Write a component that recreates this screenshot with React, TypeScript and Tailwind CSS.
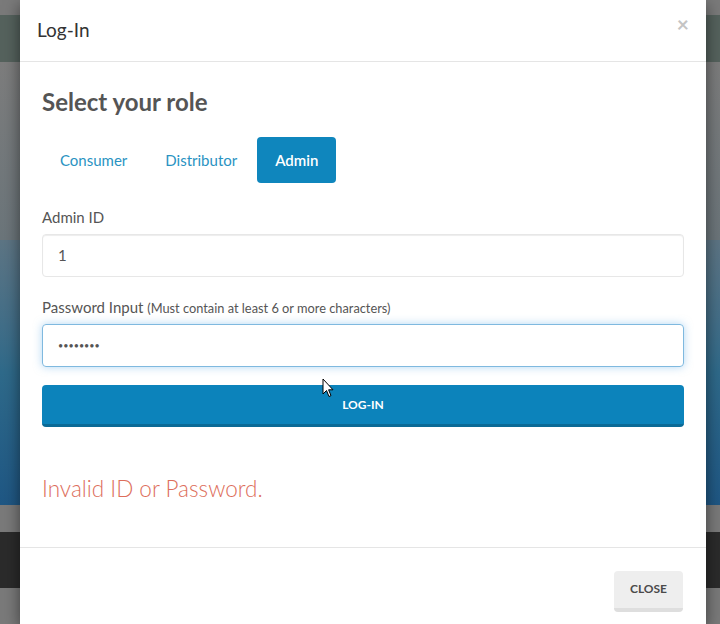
import { useState } from 'react';

const roles = ['Consumer', 'Distributor', 'Admin'];

export default function App() {
  const [role, setRole] = useState('Admin');
  const [adminId, setAdminId] = useState('1');
  const [password, setPassword] = useState('12345678');

  return (
    <div className="relative h-[624px] w-[720px] overflow-hidden" style={{ fontFamily: 'Lato, "Open Sans", sans-serif' }}>
      {/* page behind the backdrop */}
      <div className="flex h-full flex-col">
        <div className="h-[15px] bg-[#7a7a7a]" />
        <div className="h-[47px] bg-[#55625d]" />
        <div className="h-[178px] bg-gradient-to-b from-[#7d7d7d] to-[#6b757a]" />
        <div className="h-[265px] bg-gradient-to-b from-[#5d7584] via-[#2f6a8a] to-[#1f5784]" />
        <div className="h-[27px] bg-[#7a7a7a]" />
        <div className="h-[56px] bg-[#2b2b2b]" />
        <div className="flex-1 bg-[#7a7a7a]" />
      </div>

      {/* modal */}
      <div className="absolute left-[20px] top-0 w-[686px] bg-white shadow-[0_5px_15px_rgba(0,0,0,0.5)]">
        <div className="flex h-[62px] items-center justify-between border-b border-[#e5e5e5] px-[17px]">
          <h4 className="text-[19px] text-[#333]">Log-In</h4>
          <button className="-mt-[15px] text-[21px] font-bold leading-none text-[#c4c4c4]">×</button>
        </div>

        <div className="px-[22px] pb-[20px] pt-[28px]">
          <h3 className="text-[24px] font-bold leading-none text-[#555]">Select your role</h3>

          <div className="mt-[23px] flex gap-[2px]">
            {roles.map((r) => (
              <button
                key={r}
                onClick={() => setRole(r)}
                className={
                  r === role
                    ? 'h-[46px] rounded-[4px] bg-[#0f86bd] px-[18px] text-[15px] font-semibold text-white'
                    : 'h-[46px] rounded-[4px] px-[18px] text-[15px] text-[#2a93c2]'
                }
              >
                {r}
              </button>
            ))}
          </div>

          <label className="mt-[23px] block text-[15px] text-[#555]">{role} ID</label>
          <input
            value={adminId}
            onChange={(e) => setAdminId(e.target.value)}
            className="mt-[5px] h-[43px] w-full rounded-[4px] border border-[#e7e7e7] px-[15px] text-[15px] text-[#555] shadow-[inset_0_1px_1px_rgba(0,0,0,0.075)] outline-none"
          />

          <label className="mt-[19px] block text-[15px] text-[#555]">
            Password Input <span className="text-[12.8px]">(Must contain at least 6 or more characters)</span>
          </label>
          <input
            type="password"
            value={password}
            onChange={(e) => setPassword(e.target.value)}
            className="mt-[6px] h-[43px] w-full rounded-[4px] border border-[#7fb9df] px-[15px] text-[9px] text-[#555] shadow-[0_0_8px_rgba(102,175,233,0.5)] outline-none"
          />

          <button className="mt-[18px] flex h-[42px] w-full items-center justify-center rounded-[4px] border-b-[3px] border-[#0b6a96] bg-[#0c83bb] text-[12px] font-bold uppercase text-white">
            Log-in
          </button>

          <p className="mt-[45px] text-[22.5px] font-light text-[#dd6e5b]">Invalid ID or Password.</p>
        </div>

        <div className="mt-[21px] flex h-[77px] items-center justify-end border-t border-[#e5e5e5] px-[23px] pt-[11px]">
          <button className="h-[41px] rounded-[4px] border-b-[4px] border-[#dedede] bg-[#eeeeee] px-[16px] text-[12px] font-bold uppercase text-[#4a4a4a]">
            Close
          </button>
        </div>
      </div>

      {/* mouse pointer */}
      <svg className="pointer-events-none absolute left-[322px] top-[378px]" width="12" height="20" viewBox="0 0 12 20">
        <path d="M1 1 L1 16 L4.5 12.5 L7 18.5 L9 17.6 L6.6 11.8 L11 11.8 Z" fill="#fff" stroke="#000" strokeWidth="1" strokeLinejoin="round" />
      </svg>
    </div>
  );
}
